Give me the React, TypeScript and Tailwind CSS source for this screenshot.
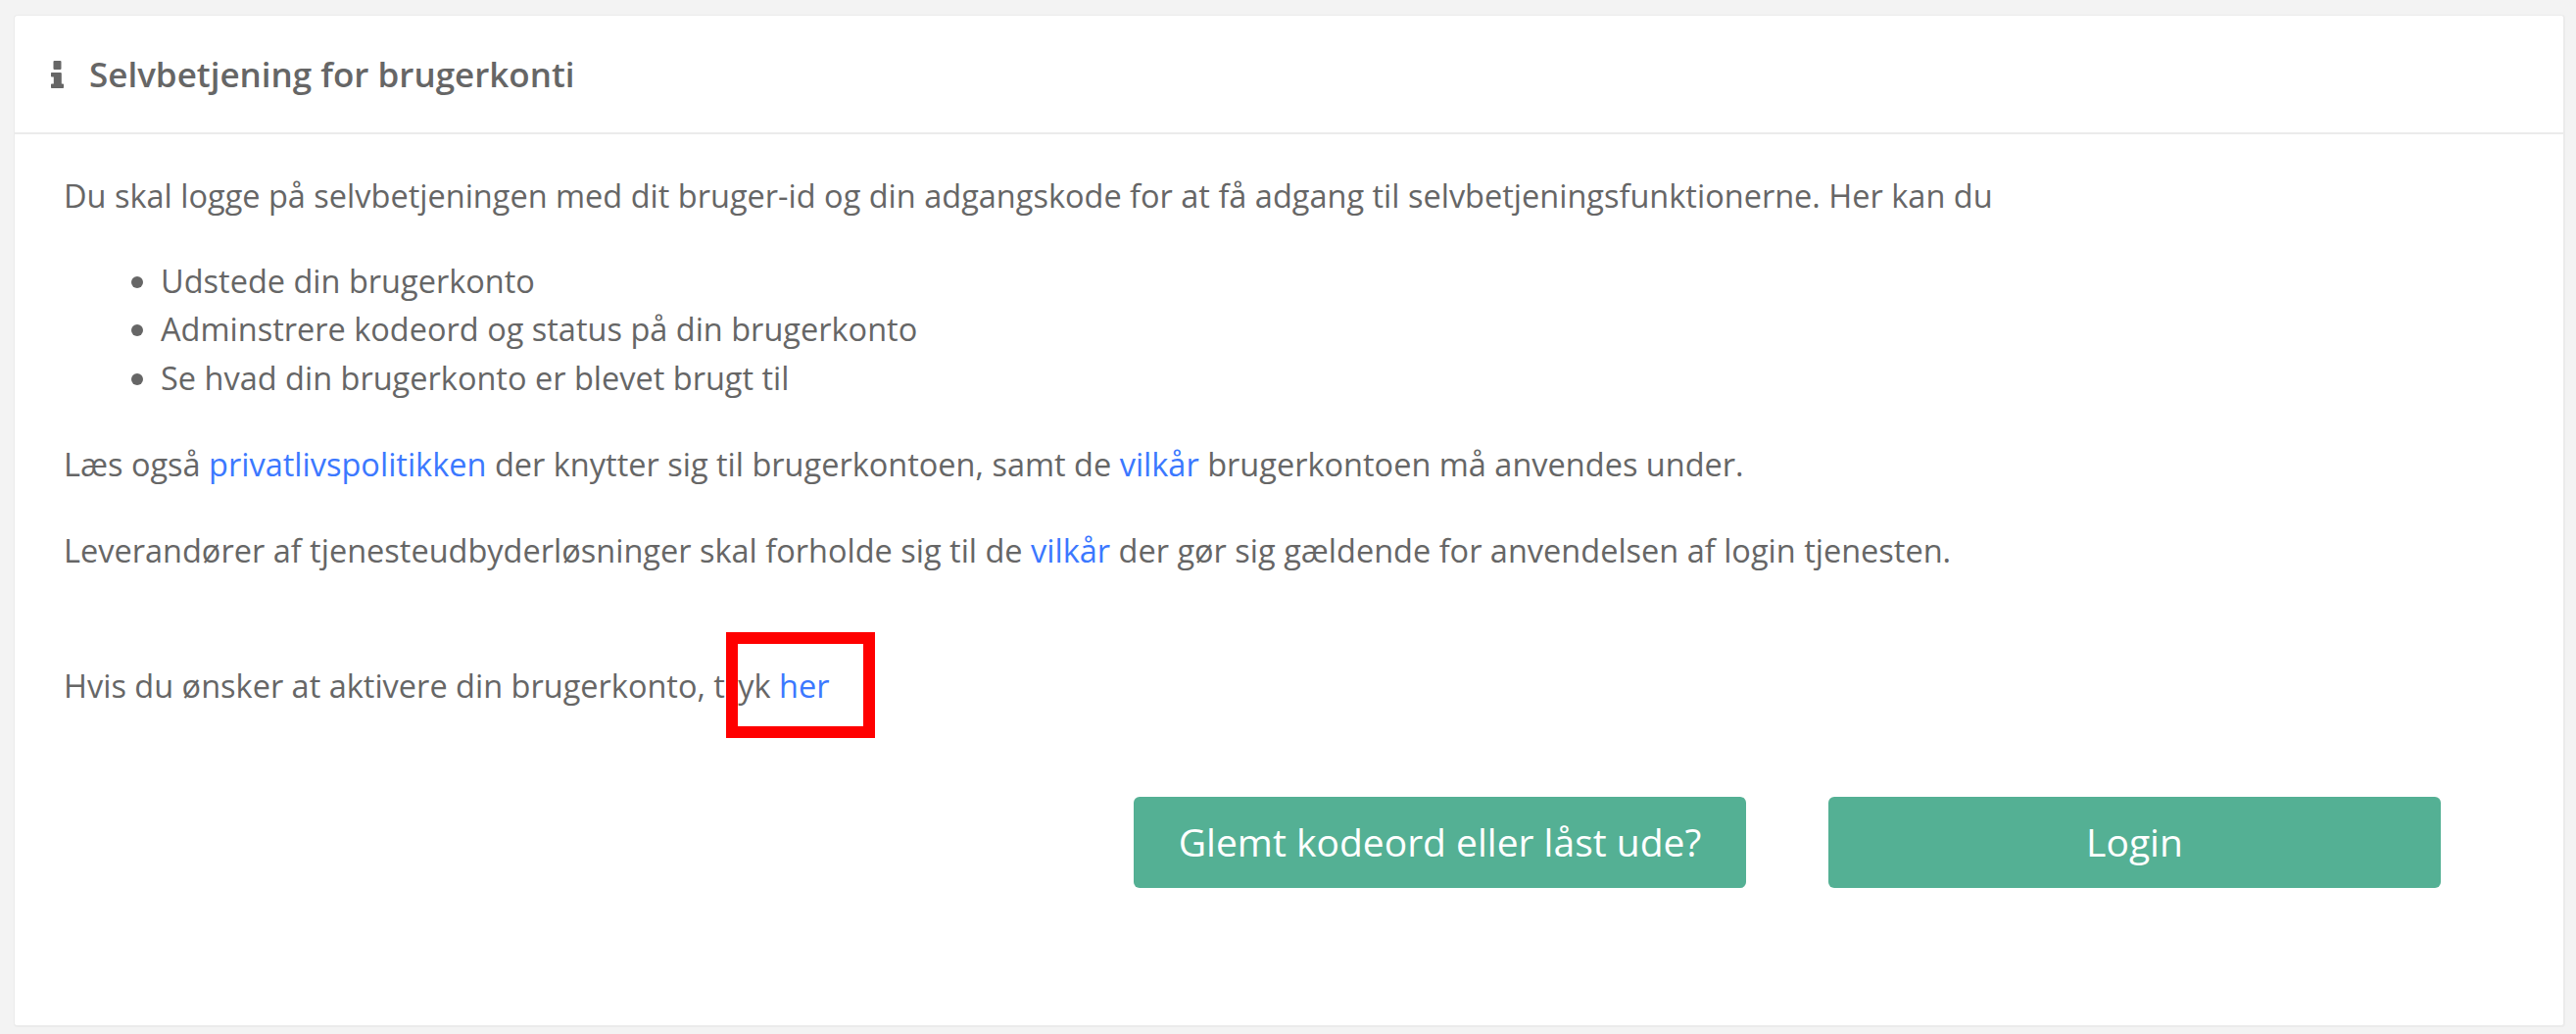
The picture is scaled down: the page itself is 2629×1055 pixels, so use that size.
const InfoIcon = () => (
  <svg viewBox="0 0 13 28" className="w-[13px] h-[28px] shrink-0 fill-current">
    <path d="M3.5 0h6a1 1 0 0 1 1 1v7a1 1 0 0 1-1 1h-6a1 1 0 0 1-1-1V1a1 1 0 0 1 1-1z" />
    <path d="M.8 12h9a1 1 0 0 1 1 1v10.5h1.4a.8.8 0 0 1 .8.8v3a.7.7 0 0 1-.7.7H.8a.8.8 0 0 1-.8-.8v-2.9a.8.8 0 0 1 .8-.8h2V16.5h-2a.8.8 0 0 1-.8-.8v-3a.7.7 0 0 1 .8-.7z" />
  </svg>
);

const Link = ({ children }: { children: string }) => (
  <a href="#" className="text-[#3b78ff]">{children}</a>
);

const App = () => {
  return (
    <div className="h-[1055px] bg-[#f3f3f3] pl-[14px] pr-[11px] pt-[15px] pb-[7px] font-['Open_Sans',sans-serif] text-[32.5px] leading-[49.5px] text-[#666666]">
      <section className="h-full bg-white rounded-[4px] border border-r-2 border-b-2 border-[#ebebeb] flex flex-col">
        <header className="h-[121px] shrink-0 border-b-2 border-[#ebebeb] flex items-center pl-[37px] gap-[26px]">
          <InfoIcon />
          <h1 className="text-[35px] font-semibold leading-none">Selvbetjening for brugerkonti</h1>
        </header>
        <div className="pt-[38px] pl-[50px] pr-[49px] flex-1">
          <p>Du skal logge på selvbetjeningen med dit bruger-id og din adgangskode for at få adgang til selvbetjeningsfunktionerne. Her kan du</p>
          <ul className="list-disc pl-[99px] mt-[37px]">
            <li>Udstede din brugerkonto</li>
            <li>Adminstrere kodeord og status på din brugerkonto</li>
            <li>Se hvad din brugerkonto er blevet brugt til</li>
          </ul>
          <p className="mt-[39px]">
            Læs også <Link>privatlivspolitikken</Link> der knytter sig til brugerkontoen, samt de <Link>vilkår</Link> brugerkontoen må anvendes under.
          </p>
          <p className="mt-[38px]">
            Leverandører af tjenesteudbyderløsninger skal forholde sig til de <Link>vilkår</Link> der gør sig gældende for anvendelsen af login tjenesten.
          </p>
          <p className="mt-[89px]">
            Hvis du ønsker at aktivere din brugerkonto, tryk <Link>her</Link>
          </p>
          <div className="mt-[88px] flex justify-end gap-[84px] pr-[76px]">
            <button className="w-[625px] h-[93px] rounded-[6px] bg-[#54b094] text-white text-[39px]">Glemt kodeord eller låst ude?</button>
            <button className="w-[625px] h-[93px] rounded-[6px] bg-[#54b094] text-white text-[39px]">Login</button>
          </div>
        </div>
      </section>
      {/* annotation box from the screenshot */}
      <div className="absolute left-[741px] top-[645px] w-[152px] h-[108px] border-[12px] border-[#ff0000]" />
    </div>
  );
};

export default App;
